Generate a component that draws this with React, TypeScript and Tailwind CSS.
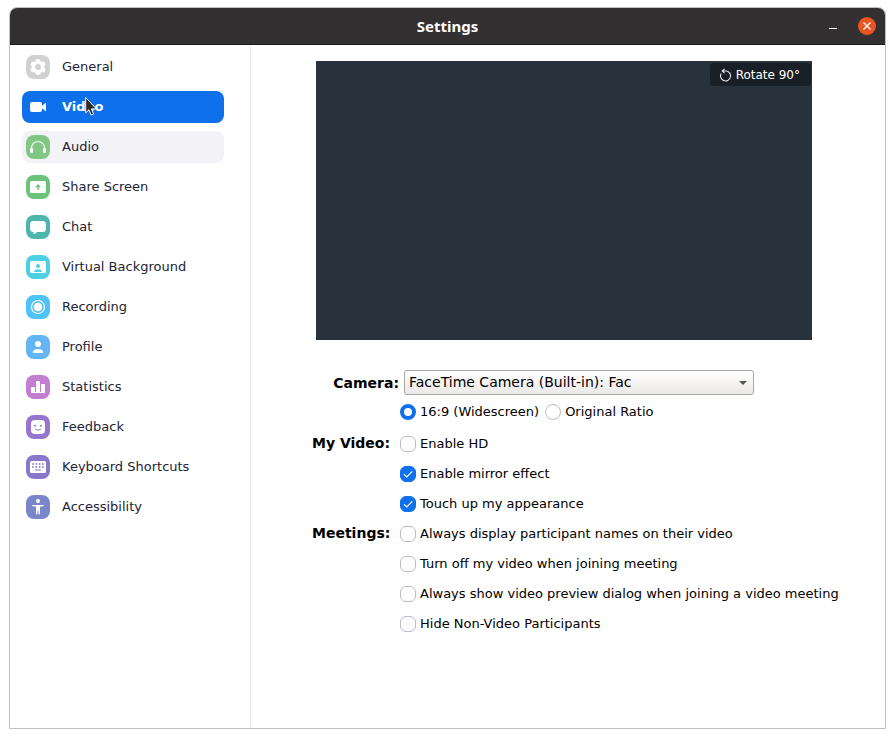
import { useState } from "react";
import type { ReactNode } from "react";

type Item = { label: string; color: string; icon: ReactNode };

const items: Item[] = [
  {
    label: "General",
    color: "bg-[#d1d1d1]",
    icon: (
      <>
        <g fill="#fff">
          <circle cx="12" cy="12" r="6.3" />
          {[0, 60, 120, 180, 240, 300].map((a) => (
            <rect key={a} x="9.6" y="4" width="4.8" height="5" rx="1.8" transform={`rotate(${a} 12 12)`} />
          ))}
        </g>
        <circle cx="12" cy="12" r="2.9" fill="#d1d1d1" />
      </>
    ),
  },
  {
    label: "Video",
    color: "bg-transparent",
    icon: (
      <g fill="#fff">
        <rect x="4" y="7" width="12" height="10" rx="2" />
        <path d="M16 10.800 19 8.300q1-.8 1 .4v6.600q0 1.200-1 .4l-3-2.500z" />
      </g>
    ),
  },
  {
    label: "Audio",
    color: "bg-[#81c784]",
    icon: (
      <g fill="#fff">
        <path d="M5.500 15.500V13a6.500 6.500 0 0 1 13 0V15.500" fill="none" stroke="#fff" strokeWidth="1.100" />
        <rect x="4" y="13" width="3" height="5" rx="1.300" />
        <rect x="17" y="13" width="3" height="5" rx="1.300" />
      </g>
    ),
  },
  {
    label: "Share Screen",
    color: "bg-[#6bc279]",
    icon: (
      <>
        <rect x="4" y="6" width="16" height="12" rx="1.500" fill="#fff" />
        <path d="M11.300 15v-2.800H9L12 9l3 3.200h-2.300V15z" fill="#6bc279" />
      </>
    ),
  },
  {
    label: "Chat",
    color: "bg-[#4db6ac]",
    icon: (
      <path
        d="M7.500 6h9A3.500 3.500 0 0 1 20 9.500v4a3.500 3.500 0 0 1-3.500 3.500H11c-1 1.300-2 2-3 2-.7 0-.7-.5-.5-2A3.500 3.500 0 0 1 4 13.500v-4A3.500 3.500 0 0 1 7.500 6z"
        fill="#fff"
      />
    ),
  },
  {
    label: "Virtual Background",
    color: "bg-[#4dd0e1]",
    icon: (
      <>
        <rect x="4" y="6" width="16" height="12" rx="1.500" fill="#fff" />
        <circle cx="12" cy="11" r="2" fill="#4dd0e1" />
        <path d="M8 17c0-2.200 2-2.800 4-2.800s4 .6 4 2.800z" fill="#4dd0e1" />
      </>
    ),
  },
  {
    label: "Recording",
    color: "bg-[#4fc3f7]",
    icon: (
      <>
        <circle cx="12" cy="12" r="6.500" fill="none" stroke="#fff" strokeWidth="1.200" />
        <circle cx="12" cy="12" r="4.300" fill="#fff" />
      </>
    ),
  },
  {
    label: "Profile",
    color: "bg-[#64b5f6]",
    icon: (
      <g fill="#fff">
        <circle cx="12" cy="9" r="3" />
        <path d="M7.500 18q-.8 0-.6-1c.5-2.200 2.300-3 5.100-3s4.600.8 5.100 3q.2 1-.6 1z" />
      </g>
    ),
  },
  {
    label: "Statistics",
    color: "bg-[#c27fd1]",
    icon: (
      <g fill="#fff">
        <path d="M5 18v-5q0-1 1-1h2q1 0 1 1v5z" />
        <path d="M10 18V7q0-1 1-1h2q1 0 1 1v11z" />
        <path d="M15 18v-8q0-1 1-1h2q1 0 1 1v8z" />
        <rect x="5" y="17" width="14" height="1" />
      </g>
    ),
  },
  {
    label: "Feedback",
    color: "bg-[#9575cd]",
    icon: (
      <>
        <rect x="5" y="5" width="14" height="14" rx="4" fill="#fff" />
        <g fill="#9575cd">
          <circle cx="9" cy="10.800" r="1" />
          <circle cx="15" cy="10.800" r="1" />
        </g>
        <path d="M9 14q3 2.600 6 0" fill="none" stroke="#9575cd" strokeWidth="1" />
      </>
    ),
  },
  {
    label: "Keyboard Shortcuts",
    color: "bg-[#8778cb]",
    icon: (
      <>
        <rect x="4" y="6" width="16" height="12" rx="1.500" fill="#fff" />
        <g fill="#8778cb">
          {[6.2, 9.500, 12.800, 16.100].map((x) => (
            <g key={x}>
              <rect x={x} y="8.200" width="1.600" height="1.600" />
              <rect x={x} y="11.200" width="1.600" height="1.600" />
            </g>
          ))}
          <rect x="9" y="14.500" width="6" height="1" />
        </g>
      </>
    ),
  },
  {
    label: "Accessibility",
    color: "bg-[#7986cb]",
    icon: (
      <g fill="#fff">
        <circle cx="12" cy="6" r="2" />
        <path d="M6.500 10h11q.6.600 0 1.200L14 11.500v7.700h-1.500V15.500h-1v3.700H10v-7.700l-3.500-.3q-.6-.6 0-1.200z" />
      </g>
    ),
  },
];

function Check({ label, checked = false }: { label: string; checked?: boolean }) {
  return (
    <label className="flex h-[30px] items-center gap-1 whitespace-nowrap">
      <span className="grid size-4 shrink-0">
        <input
          type="checkbox"
          defaultChecked={checked}
          className="peer col-start-1 row-start-1 size-4 appearance-none rounded-md border border-[#babacc] bg-white checked:border-[#0e71eb] checked:bg-[#0e71eb]"
        />
        <svg viewBox="0 0 16 16" className="pointer-events-none invisible col-start-1 row-start-1 size-4 peer-checked:visible">
          <path d="M4 8.300 6.800 11 12.300 5.300" fill="none" stroke="#fff" strokeWidth="1.200" />
        </svg>
      </span>
      {label}
    </label>
  );
}

function Radio({ label, checked = false }: { label: string; checked?: boolean }) {
  return (
    <label className="flex items-center gap-1 whitespace-nowrap">
      <input
        type="radio"
        name="ratio"
        defaultChecked={checked}
        className="size-4 shrink-0 appearance-none rounded-full border border-[#babacc] bg-white checked:border-4 checked:border-[#0e71eb]"
      />
      {label}
    </label>
  );
}

function Group({ title, children }: { title: string; children: ReactNode }) {
  return (
    <fieldset className="flex">
      <legend className="float-left w-[88px] text-sm leading-7 font-bold">{title}</legend>
      <div>{children}</div>
    </fieldset>
  );
}

export default function App() {
  const [active, setActive] = useState("Video");
  return (
    <div className="min-h-screen bg-white px-[9px] pt-[7px] pb-[9px] font-['DejaVu_Sans',sans-serif] text-[13px] text-black">
      <div className="flex min-h-[722px] flex-col overflow-hidden rounded-t-lg border border-[#bfbfbf]">
        <header className="grid h-[37px] grid-cols-[1fr_auto_1fr] items-center border-b border-[#1c1c1c] bg-[#323030] text-white">
          <h1 className="col-start-2 font-['Noto_Sans',sans-serif] text-[15px] font-bold">Settings</h1>
          <div className="flex items-center justify-end gap-[21px] pr-[9px]">
            <button type="button" aria-label="Minimize" className="flex h-[18px] w-2 items-center justify-center pt-1">
              <span className="h-px w-2 shrink-0 bg-white" />
            </button>
            <button type="button" aria-label="Close" className="flex size-[18px] items-center justify-center rounded-full bg-[#e95420]">
              <svg viewBox="0 0 18 18" className="size-[18px]">
                <path d="M5.500 5.500l7 7M12.500 5.500l-7 7" stroke="#fff" strokeWidth="1.400" />
              </svg>
            </button>
          </div>
        </header>
        <div className="flex flex-1">
          <nav className="relative w-[241px] shrink-0 border-r border-[#ededf4] pt-[6px] pr-[26px] pl-3">
            <ul className="flex flex-col gap-2">
              {items.map((it) => (
                <li key={it.label}>
                  <button
                    type="button"
                    onClick={() => setActive(it.label)}
                    className={
                      "flex h-8 w-full items-center gap-3 rounded-lg px-1 text-left " +
                      (it.label === active
                        ? "bg-[#0e71eb] font-bold text-white"
                        : it.label === "Audio"
                          ? "bg-[#f2f2f7] text-[#232333]"
                          : "text-[#232333]")
                    }
                  >
                    <svg viewBox="0 0 24 24" className={"size-6 shrink-0 rounded-lg " + it.color}>
                      {it.icon}
                    </svg>
                    {it.label}
                  </button>
                </li>
              ))}
            </ul>
            <svg viewBox="0 0 12 20" className="pointer-events-none absolute top-[51px] left-[75px] h-5 w-3">
              <path d="M.7 1.500v15.300l3.200-3 2.300 5.200 2.500-1.100-2.300-5h5z" fill="#2b2b2b" stroke="#fff" strokeWidth="1" />
            </svg>
          </nav>
          <main className="min-w-0 flex-1 pt-4 pl-[61px]">
            <div className="mr-[73px] ml-1 flex h-[279px] items-start justify-end bg-[#28323c] p-px pt-[2px]">
              <button type="button" className="flex h-[23px] items-center gap-[3px] rounded-sm bg-[#191f26] pr-[11px] pl-[9px] text-xs text-white">
                <svg viewBox="0 0 14 14" className="size-[14px]" fill="none" stroke="#e4e4e8" strokeWidth="1.100">
                  <path d="M2.200 5.500a5 5 0 1 0 5-2.500H3.200M5.600.800 3.200 3 5.600 5.200" />
                </svg>
                Rotate 90°
              </button>
            </div>
            <div className="mt-[30px] mr-[131px] flex items-center gap-[5px]">
              <label htmlFor="camera" className="w-[87px] shrink-0 text-right text-sm font-bold">
                Camera:
              </label>
              <div className="grid min-w-0 flex-1 items-center">
                <select
                  id="camera"
                  className="col-start-1 row-start-1 h-[25px] w-full appearance-none rounded-[3px] border border-[#a9a6a3] bg-linear-to-b from-white to-[#ebe9e7] px-1 pb-[2px] text-sm text-black"
                >
                  <option>FaceTime Camera (Built-in): Fac</option>
                </select>
                <svg viewBox="0 0 8 4" className="pointer-events-none col-start-1 row-start-1 mr-[7px] h-1 w-2 justify-self-end">
                  <path d="M0 0h8L4 4z" fill="#555" />
                </svg>
              </div>
            </div>
            <div className="mt-2 mb-[9px] ml-[88px] flex h-[17px] items-center gap-[6px]">
              <Radio label="16:9 (Widescreen)" checked />
              <Radio label="Original Ratio" />
            </div>
            <Group title="My Video:">
              <Check label="Enable HD" />
              <Check label="Enable mirror effect" checked />
              <Check label="Touch up my appearance" checked />
            </Group>
            <Group title="Meetings:">
              <Check label="Always display participant names on their video" />
              <Check label="Turn off my video when joining meeting" />
              <Check label="Always show video preview dialog when joining a video meeting" />
              <Check label="Hide Non-Video Participants" />
            </Group>
          </main>
        </div>
      </div>
    </div>
  );
}
